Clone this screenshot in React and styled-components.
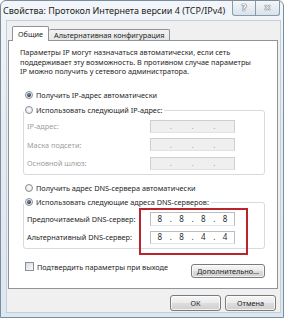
import React from "react";
import styled, { createGlobalStyle } from "styled-components";

const Global = createGlobalStyle`
  html, body { margin: 0; padding: 0; background: #ffffff; }
  body { font-family: "Noto Sans", "Open Sans", sans-serif; }
  * { box-sizing: border-box; }
`;

const Window = styled.div`
  width: 284px;
  height: 318px;
  border: 1px solid #7d8c9b;
  border-radius: 6px 6px 0 0;
  background: linear-gradient(180deg, #f2f6fa 0%, #e4ecf3 40%, #dde7f0 100%);
  display: flex;
  flex-direction: column;
`;

const TitleBar = styled.div`
  height: 19px;
  flex: none;
  display: flex;
  align-items: flex-start;
  padding-left: 2px;
`;

const Title = styled.div`
  flex: 1;
  font-size: 9px;
  line-height: 19px;
  color: #222;
  white-space: nowrap;
`;

const Caption = styled.div`
  display: flex;
  margin-right: 3px;
`;

const CaptionButton = styled.div`
  width: ${(p) => p.$w}px;
  height: 15px;
  border: 1px solid #8c9aa8;
  border-top: none;
  border-radius: ${(p) => p.$r};
  background: linear-gradient(180deg, #f4f7fa 0%, #e6ecf2 50%, #d9e2eb 100%);
  display: flex;
  align-items: center;
  justify-content: center;
  color: #fbfcfd;
  font-size: 9px;
  font-weight: bold;
  font-family: "DejaVu Sans", sans-serif;
  text-shadow: 0 0 1px #55606c, 0 0 1px #55606c, 0 0 1px #55606c;
  & + & { border-left: none; }
`;

const Client = styled.div`
  flex: 1;
  min-height: 0;
  margin: 0 2px 4px 5px;
  background: #f0f0f0;
  border: 1px solid #c4cfda;
  padding: 5px 2px 0 1px;
  display: flex;
  flex-direction: column;
  font-size: 7.3px;
  color: #1e1e1e;
`;

const Tabs = styled.div`
  display: flex;
  align-items: flex-end;
  height: 14px;
  flex: none;
  padding-left: 4px;
`;

const Tab = styled.div`
  height: ${(p) => (p.$active ? 15 : 11)}px;
  padding: 0 5px;
  border: 1px solid #8f939b;
  border-bottom: none;
  border-radius: 2px 2px 0 0;
  background: ${(p) =>
    p.$active ? "#ffffff" : "linear-gradient(180deg, #f3f3f3 0%, #e6e6e6 100%)"};
  display: flex;
  align-items: center;
  white-space: nowrap;
  margin-bottom: ${(p) => (p.$active ? -1 : 0)}px;
  position: relative;
  z-index: ${(p) => (p.$active ? 1 : 0)};
  & + & { border-left: none; }
`;

const Panel = styled.div`
  position: relative;
  flex: none;
  height: 249px;
  background: #ffffff;
  border: 1px solid #8f939b;
  padding: 7px 12px 0 11px;
  display: flex;
  flex-direction: column;
`;

const Intro = styled.p`
  margin: 0;
  line-height: 9.5px;
  white-space: nowrap;
`;

const OptionRow = styled.div`
  display: flex;
  align-items: center;
  height: 10px;
  margin-top: ${(p) => p.$mt}px;
  margin-left: 5px;
  white-space: nowrap;
`;

const Radio = styled.span`
  width: 8px;
  height: 8px;
  border-radius: 50%;
  border: 1px solid #8a8f95;
  background: radial-gradient(circle at 50% 40%, #ffffff 0%, #e6e8ea 70%, #d2d5d8 100%);
  display: inline-flex;
  align-items: center;
  justify-content: center;
  margin-right: 3px;
  flex: none;
  &::after {
    content: "";
    width: 4px;
    height: 4px;
    border-radius: 50%;
    background: ${(p) =>
      p.$on ? "radial-gradient(circle at 40% 35%, #7d8ea3 0%, #25324a 70%)" : "transparent"};
  }
`;

const GroupBox = styled.div`
  margin: ${(p) => p.$mt}px 0 0 3px;
  padding: 0 0 4px 3px;
  border: 1px solid #d5dbe0;
  border-radius: 3px;
  display: flex;
  flex-direction: column;
  gap: ${(p) => p.$gap}px;
`;

const GroupLegend = styled.div`
  align-self: flex-start;
  margin: -6px 0 0 -3px;
  padding: 0 2px 0 1px;
  height: 10px;
  display: flex;
  align-items: center;
  white-space: nowrap;
  background: #ffffff;
`;

const FieldRow = styled.div`
  display: flex;
  align-items: center;
  margin-top: ${(p) => p.$mt || 0}px;
`;

const FieldLabel = styled.span`
  width: 123px;
  flex: none;
  color: ${(p) => (p.$disabled ? "#9d9d9d" : "#1e1e1e")};
  white-space: nowrap;
`;

const IpBox = styled.div`
  width: 85px;
  height: ${(p) => p.$h}px;
  flex: none;
  border: 1px solid ${(p) => (p.$disabled ? "#cfcfcf" : "#b9bcc1")};
  border-bottom-color: ${(p) => (p.$disabled ? "#e2e2e2" : "#e1e3e6")};
  background: ${(p) => (p.$disabled ? "#efefef" : "#ffffff")};
  display: grid;
  grid-template-columns: 1fr 4px 1fr 4px 1fr 4px 1fr;
  align-items: center;
  text-align: center;
  color: ${(p) => (p.$disabled ? "#9d9d9d" : "#2a2a2a")};
  font-size: 8px;
  line-height: 1;
`;

const Octet = styled.span``;

const Dot = styled.span`
  text-align: center;
`;

const Highlight = styled.div`
  position: absolute;
  left: 130px;
  top: 167px;
  width: 109px;
  height: 47px;
  border: 2px solid #b9252b;
  pointer-events: none;
`;

const BottomRow = styled.div`
  display: flex;
  align-items: flex-start;
  justify-content: space-between;
  margin-top: 13px;
  margin-left: 5px;
`;

const CheckLabel = styled.label`
  display: flex;
  align-items: center;
  height: 10px;
  white-space: nowrap;
`;

const Checkbox = styled.span`
  width: 9px;
  height: 9px;
  border: 1px solid #8a8f95;
  background: linear-gradient(135deg, #d9dcdf 0%, #eceef0 60%, #f7f8f9 100%);
  margin-right: 3px;
  flex: none;
`;

const Button = styled.div`
  width: ${(p) => p.$w}px;
  height: ${(p) => p.$h}px;
  margin-top: ${(p) => p.$mt || 0}px;
  border: 1px solid #7b7b7b;
  border-radius: 3px;
  background: linear-gradient(180deg, #f6f6f6 0%, #ebebeb 48%, #dddddd 52%, #cfcfcf 100%);
  box-shadow: inset 0 0 0 1px rgba(255, 255, 255, 0.7);
  display: flex;
  align-items: center;
  justify-content: center;
  white-space: nowrap;
`;

const Footer = styled.div`
  display: flex;
  justify-content: flex-end;
  gap: 4px;
  padding: 6px 2px 0 0;
`;

const IpField = ({ values, h, disabled }) => (
  <IpBox $h={h} $disabled={disabled}>
    {values.map((v, i) => (
      <React.Fragment key={i}>
        {i > 0 && <Dot>.</Dot>}
        <Octet>{v}</Octet>
      </React.Fragment>
    ))}
  </IpBox>
);

export default function App() {
  const empty = ["", "", "", ""];
  return (
    <>
      <Global />
      <Window>
        <TitleBar>
          <Title>Свойства: Протокол Интернета версии 4 (TCP/IPv4)</Title>
          <Caption>
            <CaptionButton $w={24} $r="0 0 0 3px">?</CaptionButton>
            <CaptionButton $w={24} $r="0 0 3px 0">✕</CaptionButton>
          </Caption>
        </TitleBar>
        <Client>
          <Tabs>
            <Tab $active>Общие</Tab>
            <Tab>Альтернативная конфигурация</Tab>
          </Tabs>
          <Panel>
            <Intro>
              Параметры IP могут назначаться автоматически, если сеть
              <br />
              поддерживает эту возможность. В противном случае параметры
              <br />
              IP можно получить у сетевого администратора.
            </Intro>
            <OptionRow $mt={13}>
              <Radio $on />
              Получить IP-адрес автоматически
            </OptionRow>
            <GroupBox $mt={10} $gap={5.5}>
              <GroupLegend>
                <Radio />
                Использовать следующий IP-адрес:
              </GroupLegend>
              <FieldRow $mt={-0.5}>
                <FieldLabel $disabled>IP-адрес:</FieldLabel>
                <IpField values={empty} h={13} disabled />
              </FieldRow>
              <FieldRow>
                <FieldLabel $disabled>Маска подсети:</FieldLabel>
                <IpField values={empty} h={13} disabled />
              </FieldRow>
              <FieldRow>
                <FieldLabel $disabled>Основной шлюз:</FieldLabel>
                <IpField values={empty} h={13} disabled />
              </FieldRow>
            </GroupBox>
            <OptionRow $mt={8}>
              <Radio />
              Получить адрес DNS-сервера автоматически
            </OptionRow>
            <GroupBox $mt={9} $gap={5}>
              <GroupLegend>
                <Radio $on />
                Использовать следующие адреса DNS-серверов:
              </GroupLegend>
              <FieldRow>
                <FieldLabel>Предпочитаемый DNS-сервер:</FieldLabel>
                <IpField values={["8", "8", "8", "8"]} h={14} />
              </FieldRow>
              <FieldRow>
                <FieldLabel>Альтернативный DNS-сервер:</FieldLabel>
                <IpField values={["8", "8", "4", "4"]} h={13} />
              </FieldRow>
            </GroupBox>
            <BottomRow>
              <CheckLabel>
                <Checkbox />
                Подтвердить параметры при выходе
              </CheckLabel>
              <Button $w={74} $h={14} $mt={2}>Дополнительно...</Button>
            </BottomRow>
            <Highlight />
          </Panel>
          <Footer>
            <Button $w={51} $h={16}>ОК</Button>
            <Button $w={51} $h={16}>Отмена</Button>
          </Footer>
        </Client>
      </Window>
    </>
  );
}
